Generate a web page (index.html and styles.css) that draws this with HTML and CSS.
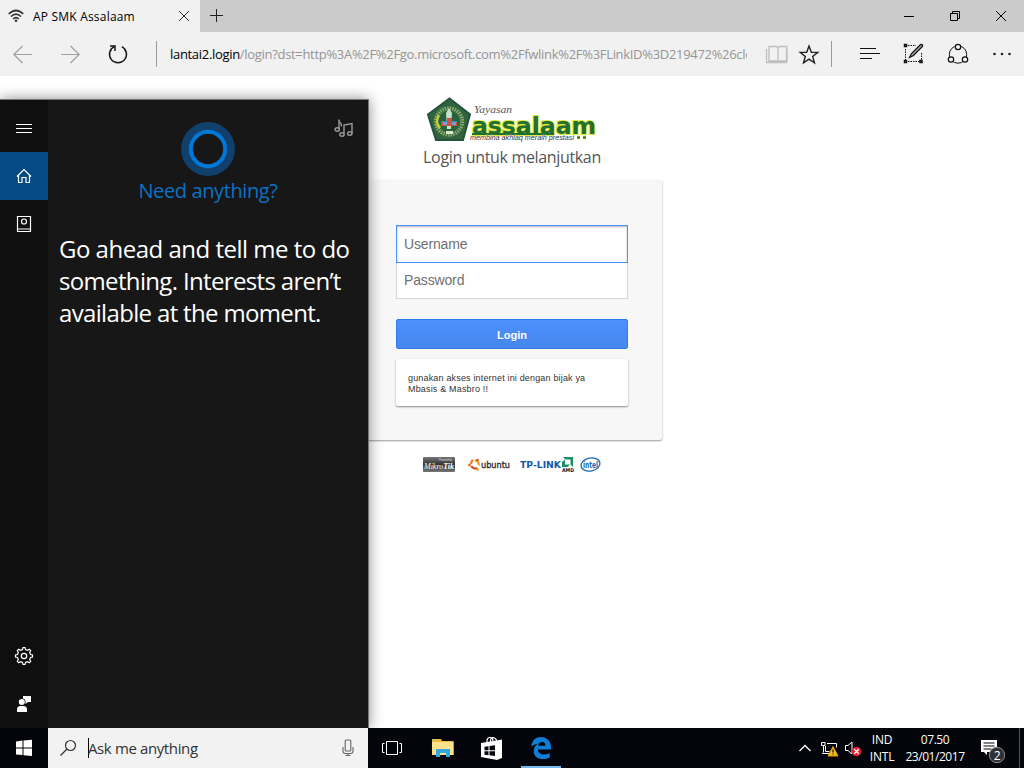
FILE: index.html
```html
<!DOCTYPE html>
<html lang="en">
<head>
<meta charset="utf-8">
<title>AP SMK Assalaam</title>
<link rel="stylesheet" href="styles.css">
</head>
<body>
<div class="desktop">
  <header class="tabbar">
    <div class="tab">
      <svg class="wifi" width="16" height="14" viewBox="0 0 16 14" fill="none" stroke="#333" stroke-width="1.700"><path d="M.7 5Q8-2 15.300 5M3 7.500Q8 2.700 13 7.500M5.200 10Q8 7.200 10.800 10"/><circle cx="8" cy="11.700" r="1.300" fill="#333" stroke="none"/></svg>
      <span class="tab-title">AP SMK Assalaam</span>
      <svg width="12" height="12" viewBox="0 0 12 12" stroke="#333" fill="none"><path d="M1 1l10 10M11 1L1 11"/></svg>
    </div>
    <svg class="plus" width="14" height="14" viewBox="0 0 14 14" stroke="#222" fill="none"><path d="M6.500 0v13M0 6.500h13"/></svg>
    <div class="window-buttons">
      <svg width="46" height="32" viewBox="0 0 46 32" stroke="#000" fill="none"><path d="M18 16.500h10"/></svg>
      <svg width="46" height="32" viewBox="0 0 46 32" stroke="#000" fill="none"><path d="M18.500 13.500h7v7h-7zM20.500 13v-1.500h7v7h-2"/></svg>
      <svg width="46" height="32" viewBox="0 0 46 32" stroke="#000" fill="none"><path d="M18 11l10 10M28 11L18 21"/></svg>
    </div>
  </header>
  <nav class="toolbar">
    <svg width="48" height="44" viewBox="0 0 48 44" stroke="#a0a0a0" stroke-width="1.200" fill="none"><path d="M32 22.500H13.500M22.500 14l-8.700 8.500 8.700 8.500"/></svg>
    <svg width="48" height="44" viewBox="0 0 48 44" stroke="#a0a0a0" stroke-width="1.200" fill="none"><path d="M13 22.500h18.500M22.500 14l8.700 8.500-8.700 8.500"/></svg>
    <svg width="60" height="44" viewBox="0 0 60 44" stroke="#1a1a1a" stroke-width="1.500" fill="none"><path d="M25.800 14.700a8.500 8.500 0 1 1-7.600 0M14 14h5v5"/></svg>
    <span class="divider"></span>
    <span class="address"><b>lantai2.login</b>/login?dst=http%3A%2F%2Fgo.microsoft.com%2Ffwlink%2F%3FLinkID%3D219472%26clcid</span>
    <svg width="84" height="44" viewBox="0 0 84 44" fill="none"><path d="M22 14.500h7.500l1.500 1.500v14l-1.500-1H22zM40 14.500h-7.500L31 16v14l1.500-1H40zM19.500 17v13.500h20V17" stroke="#bebebe" stroke-width="1.300"/><path d="M62 14l2.300 6.200 6.500.2-5.100 4 1.800 6.400-5.500-3.700-5.500 3.700 1.800-6.400-5.100-4 6.500-.2z" stroke="#222" stroke-width="1.400"/></svg>
    <span class="divider"></span>
    <svg width="192" height="44" viewBox="0 0 192 44" fill="none" stroke="#111">
      <path d="M28 16.500h16M28 21.500h20M28 26.500h12"/>
      <path d="M76 13.500h8M73.500 17v11M89.500 21v7M76 29.500h12" stroke-dasharray="1.500 1"/><path d="M72.500 12.500h2v2h-2zM72.500 28.500h2v2h-2zM88 28.500h2v2h-2z" stroke-width="1.500"/><path d="M77.500 25.500l2-4 9-9c1.500-.6 2.500.5 2 2l-9 9z" fill="#999" stroke-width="1.200"/>
      <circle cx="126" cy="22.500" r="8.700"/><g fill="#f0f0f0" stroke-width="1.200"><circle cx="126" cy="15" r="2.700"/><circle cx="119" cy="27.500" r="2.700"/><circle cx="133" cy="27.500" r="2.700"/></g>
      <g fill="#222" stroke="none"><circle cx="162.500" cy="22" r="1.300"/><circle cx="170" cy="22" r="1.300"/><circle cx="177.500" cy="22" r="1.300"/></g>
    </svg>
  </nav>

  <main class="page">
    <svg class="brand" width="170" height="48" viewBox="0 0 170 48">
      <path d="M22.500 2.500L43 18.500 36 44H9L1 18.500z" fill="#31633d" stroke="#25523a" stroke-width="2"/>
      <circle cx="22" cy="25.500" r="13.200" fill="none" stroke="#88ad73" stroke-width="4" stroke-dasharray="1.500 1"/>
      <path d="M11 18q-5 9 1 15l2-2q-5-5-1-11z" fill="#c4cb35"/>
      <circle cx="22" cy="25" r="9.500" fill="#23643f"/>
      <path d="M22 12l3 5-1 16h-4l-1-16z" fill="#c8e0c4"/><path d="M14 25h16v4H14z" fill="#4287bd"/><path d="M20 22h5v4h5v4H14v-4h6z" fill="#cf5144"/><path d="M16 26h4v3h-4zM25 26h4v3h-4z" fill="#65a7d1"/>
      <path d="M19 35h7v3h-7z" fill="#dce9ce"/>
      <path d="M45 38.500h82M150 41.500h3M156 41.500h3" stroke="#d9e832" stroke-width="4"/>
      <text x="47" y="17" textLength="38" lengthAdjust="spacingAndGlyphs" class="brand-script">Yayasan</text>
      <text x="45" y="38" textLength="124" lengthAdjust="spacingAndGlyphs" class="brand-name">assalaam</text>
      <path d="M45 38h82M150 41.500h3M156 41.500h3" stroke="#236f31" stroke-width="2"/>
      <text x="43" y="44" textLength="104" lengthAdjust="spacingAndGlyphs" class="brand-tag">membina akhlaq meraih prestasi</text>
    </svg>
    <h1>Login untuk melanjutkan</h1>
    <form class="card">
      <input class="field focused" type="text" placeholder="Username">
      <input class="field" type="password" placeholder="Password">
      <button type="button">Login</button>
      <p class="note">gunakan akses internet ini dengan bijak ya<br>Mbasis &amp; Masbro !!</p>
    </form>
    <svg class="partners" width="180" height="18" viewBox="0 0 180 18">
      <defs><linearGradient id="metal" x1="0" y1="0" x2="0" y2="1"><stop offset="0" stop-color="#777"/><stop offset=".5" stop-color="#333"/><stop offset="1" stop-color="#777"/></linearGradient></defs>
      <rect x="1" y="1" width="32" height="15" rx="1" fill="url(#metal)"/>
      <text x="17" y="4.500" textLength="13" class="partner-tiny">Powered by</text>
      <text x="2" y="12.500" textLength="30" lengthAdjust="spacingAndGlyphs" class="mikrotik">Mikro<tspan font-weight="bold">Tik</tspan></text>
      <g fill="none" stroke-width="2.200"><path d="M51 4a4.500 4.500 0 0 0-2 4" stroke="#e87b20"/><path d="M49.300 10a4.500 4.500 0 0 0 6 2" stroke="#d34a20"/><path d="M52.500 4.500a4.500 4.500 0 0 1 4.500 5" stroke="#eda126"/></g><circle cx="47.500" cy="9" r="1.300" fill="#e85b1b"/><circle cx="55.500" cy="4" r="1.300" fill="#d64622"/><circle cx="55.500" cy="13.500" r="1.300" fill="#f09622"/>
      <text x="59" y="11.500" textLength="29" lengthAdjust="spacingAndGlyphs" class="ubuntu">ubuntu</text>
      <text x="98" y="12" textLength="41" lengthAdjust="spacingAndGlyphs" class="tplink">TP-LINK</text>
      <path d="M141 1h10v10l-2.500-2.500v-5h-5zM140 6l3-2.500v5h5l-2.500 2.500H140z" fill="#169266"/>
      <text x="140" y="16" textLength="12" lengthAdjust="spacingAndGlyphs" class="amd">AMD</text>
      <ellipse cx="168.500" cy="8.500" rx="9.600" ry="6.500" fill="none" stroke="#1768ad" stroke-width="1.300" transform="rotate(-12 168.500 8.500)"/>
      <text x="161" y="11.500" textLength="15" lengthAdjust="spacingAndGlyphs" class="intel">intel</text>
    </svg>
  </main>

  <aside class="assistant">
    <div class="rail">
      <svg width="48" height="52" viewBox="0 0 48 52" stroke="#fff" fill="none"><path d="M16 24.500h16M16 28.500h16M16 32.500h16"/></svg>
      <svg class="active" width="48" height="48" viewBox="0 0 48 48" stroke="#fff" stroke-width="1.200" fill="none"><path d="M17 24.500L24 17.500l7 7M18.500 23.500v7h3.500v-5h4v5h3.500v-7"/></svg>
      <svg width="48" height="48" viewBox="0 0 48 48" stroke="#fff" stroke-width="1.200" fill="none"><path d="M17.500 16.500h13v15h-13zM17.500 29h13"/><circle cx="24" cy="21.500" r="2.500"/></svg>
      <svg class="settings" width="48" height="48" viewBox="0 0 48 48" stroke="#fff" stroke-width="1.200" fill="none"><path d="M22.500 18l.5-2h2l.5 2 2 .8 1.800-1 1.400 1.400-1 1.800.8 2 2 .5v2l-2 .5-.8 2 1 1.800-1.400 1.400-1.800-1-2 .8-.5 2h-2l-.5-2-2-.8-1.800 1-1.400-1.400 1-1.800-.8-2-2-.5v-2l2-.5.8-2-1-1.800 1.400-1.400 1.800 1z" transform="translate(0 -.5)"/><circle cx="24" cy="24" r="2.700"/></svg>
      <svg width="48" height="48" viewBox="0 0 48 48" fill="#fff"><circle cx="21.800" cy="22" r="3"/><path d="M17 32v-2.500q0-3.500 3.500-3.500h3q3.500 0 3.500 3.500V32zM23 16h8v6h-3l-2.500 2V21q0-2-2.500-2.500z"/></svg>
    </div>
    <section class="assistant-body">
      <svg class="notes" width="20" height="20" viewBox="0 0 20 20" stroke="#999" stroke-width="1.400" fill="none"><ellipse cx="3.200" cy="11.500" rx="2.200" ry="1.800"/><path d="M5 11V1.500q0 3 2.300 4.500v2.500"/><ellipse cx="8" cy="16.500" rx="2.200" ry="1.800"/><ellipse cx="15.800" cy="15.500" rx="2.200" ry="1.800"/><path d="M10 16.500V7l8-1.500v10"/></svg>
      <svg class="ring" width="54" height="54" viewBox="0 0 54 54"><circle cx="27" cy="27" r="27" fill="#10406b"/><circle cx="27" cy="27" r="17.200" fill="#171717" stroke="#0078d7" stroke-width="4"/></svg>
      <h2>Need anything?</h2>
      <p><span>Go ahead and tell me to do</span><br><span class="tight">something. Interests aren’t</span><br><span class="tight">available at the moment.</span></p>
    </section>
  </aside>

  <footer class="taskbar">
    <svg width="48" height="40" viewBox="0 0 48 40" fill="#fff"><path d="M16 13.500l6.500-.9v7H16zM23.500 12.400L32 11.800v7.800h-8.500zM16 20.600h6.500v6.500L16 26.400zM23.500 20.600H32V28l-8.500-.8z"/></svg>
    <div class="search">
      <svg width="18" height="18" viewBox="0 0 18 18" fill="none" stroke="#333" stroke-width="1.200"><circle cx="10.500" cy="6.500" r="5"/><path d="M7 10L.5 16.500"/></svg>
      <span class="caret"></span><span class="query">Ask me anything</span>
      <svg width="12" height="18" viewBox="0 0 12 18" fill="none" stroke="#666" stroke-width="1.100"><rect x="3.200" y="1" width="5.600" height="11" rx="1"/><path d="M1 8v4q0 2.500 2.500 2.500h5q2.500 0 2.500-2.500V8M6 14.500V16.500M3.500 16.500h5"/></svg>
    </div>
    <svg width="48" height="40" viewBox="0 0 48 40" fill="none" stroke="#fff"><path d="M18.500 13.500h11v13h-11zM16.500 15.500h-2v9h2M31.500 15.500h2v9h-2"/></svg>
    <svg width="50" height="40" viewBox="0 0 50 40"><path d="M16 11h9l1 2h11.500v14H16z" fill="#efb940"/><path d="M16 14h21.500v13H16z" fill="#ffe18b"/><path d="M20 29v-8h14v8h-4v-4h-6v4z" fill="#31a8e0"/><path d="M18 12h2" stroke="#54c9ee"/></svg>
    <svg width="50" height="40" viewBox="0 0 50 40"><path d="M21 15v-3q1-3 3.500-2.500T27 13v2M24.500 14v-2q1-3.500 4-2t1.500 5" fill="none" stroke="#fff" stroke-width="1.200"/><path d="M15 15l21-3.500V30l-5 2-16-3z" fill="#fff"/><path d="M18.500 18.700l4-.5v4h-4zM23.500 18l5.500-.7v4.900h-5.500zM18.500 23.200h4v4l-4-.5zM23.500 23.200H29V28l-5.500-.7z" fill="#05070b"/></svg>
    <div class="edge-task"><svg width="40" height="40" viewBox="0 0 40 40"><path d="M10.200 18.500C11 12 15 9 20 9c6 0 10 4.500 10 10v2.500H17c0 3.300 2.500 5 6 5 2.500 0 4.500-.7 5.700-1.500v4.500c-2 1-4.400 1.500-7 1.500-6 0-9-3.700-9-7.800 0-3.700 1.800-6.500 5.200-8-3.500.7-5.800 2-7.700 3.300zM17 17.800h7.500c0-2.300-1-3.700-3.500-3.700-2.200 0-3.500 1.400-4 3.700z" fill="#0e7dd8"/></svg></div>
    <div class="tray">
      <svg width="82" height="40" viewBox="0 0 82 40" fill="none" stroke="#fff"><path d="M13.500 23l5.500-5.500 5.500 5.500" stroke-width="1.300"/><path d="M35.500 14.500h3.500v3h-3.500zM37.500 17.500v7M41 15.500h9.500v4M39.500 18v5.500h4M36 25.500h8"/><path d="M47 18.500l5 9.500H42z" fill="#f7bd1e" stroke="#dba100"/><path d="M47 21.500v3M47 25.500v1" stroke="#222" stroke-width="1.300"/><path d="M59.500 17.500h2.500l4-3.500v12l-4-3.500h-2.500z"/><circle cx="70.500" cy="23.500" r="4.800" fill="#dc2437" stroke="none"/><path d="M68.300 21.300l4.400 4.400M72.700 21.300l-4.400 4.400" stroke-width="1.300"/></svg>
      <div class="language">IND<br>INTL</div>
      <div class="clock">07.50<br>23/01/2017</div>
      <svg width="32" height="40" viewBox="0 0 32 40"><path d="M8 12h16v12H14v3l-3-3H8z" fill="#fff"/><path d="M10.500 15h11M10.500 18h11M10.500 21h8" stroke="#05070b"/><circle cx="24" cy="27" r="7.700" fill="#303134" stroke="#898989"/><text x="24" y="31.500" text-anchor="middle" class="badge">2</text></svg>
      <span class="show-desktop"></span>
    </div>
  </footer>
</div>
</body>
</html>
```
FILE: styles.css
```css
* { box-sizing: border-box; }
body { margin: 0; font-family: "Open Sans", "Noto Sans", sans-serif; }
svg { display: block; flex: none; }
.desktop { width: 1024px; height: 768px; display: flex; flex-direction: column; position: relative; overflow: hidden; background: #fff; }

.tabbar { height: 32px; display: flex; align-items: center; background: #cbcbcb; }
.tab { width: 200px; height: 32px; display: flex; align-items: center; padding: 0 10px 0 8px; background: #f1f1f1; }
.wifi { margin-top: -1px; }
.tab-title { flex: 1; padding-left: 9px; font-size: 12px; letter-spacing: .2px; white-space: nowrap; }
.plus { margin-left: 10px; }
.window-buttons { margin-left: auto; display: flex; }

.toolbar { height: 44px; display: flex; align-items: center; background: #f1f1f1; }
.divider { width: 1px; height: 26px; background: #999; }
.address { width: 591px; height: 24px; padding-left: 13px; overflow: hidden; color: #959595; font-size: 13px; line-height: 24px; letter-spacing: -.31px; white-space: nowrap; }
.address b { color: #000; font-weight: 400; }

.page { flex: 1; min-height: 0; display: flex; flex-direction: column; align-items: center; padding-top: 20px; }
.brand-script { font: italic 11px "Liberation Serif", serif; fill: #555; }
.brand-name { font: 900 23px "DejaVu Sans", sans-serif; fill: #236f31; stroke: #d9e832; stroke-width: 2px; paint-order: stroke; }
.brand-tag { font: italic 7px "Liberation Sans", sans-serif; fill: #333; stroke: #fff; stroke-width: .6px; paint-order: stroke; }
h1 { margin: 1px 0 0; height: 35px; color: #555; font-size: 16px; line-height: 25px; font-weight: 400; letter-spacing: -.34px; white-space: nowrap; }
.card { width: 300px; height: 260px; padding: 45px 34px 0; display: flex; flex-direction: column; background: #f7f7f7; border-radius: 2px; box-shadow: 0 1px 2px rgba(0,0,0,.4); }
.field { width: 232px; height: 36px; padding: 0 7px 2px; border: 1px solid #d5d5d5; border-top: 0; border-radius: 0; outline: 0; color: #666; background: #fff; font: 14px "Liberation Sans", sans-serif; letter-spacing: -.15px; }
.field::placeholder { color: #707070; opacity: 1; }
.field.focused { height: 38px; padding-bottom: 0; border: 1px solid #4d90fe; box-shadow: inset 0 1px 2px rgba(0,0,0,.3); }
.card button { height: 30px; margin: 20px 0 10px; padding: 1px 0 0; border: 1px solid #3079ed; border-radius: 2px; background: linear-gradient(#4d90fe, #4787ed); color: #fff; font: bold 11px "Liberation Sans", sans-serif; text-shadow: 0 1px rgba(0,0,0,.1); }
.note { height: 47px; margin: 0; padding: 14px 12px; background: #fff; border-radius: 2px; box-shadow: 0 1px 2px rgba(0,0,0,.45); color: #333; font: 9px/11px "Liberation Sans", sans-serif; letter-spacing: .17px; white-space: nowrap; }
.partners { margin-top: 16px; }
.partner-tiny { font: 3px "Liberation Sans", sans-serif; fill: #ccc; }
.mikrotik { font: italic 9px "Liberation Serif", serif; fill: #fff; }
.ubuntu { font: 9px "DejaVu Sans", sans-serif; fill: #222; stroke: #222; stroke-width: .3px; }
.tplink { font: bold 8px "DejaVu Sans", sans-serif; fill: #1557a5; }
.amd { font: bold 5px "DejaVu Sans", sans-serif; fill: #111; }
.intel { font: bold 8px "DejaVu Sans", sans-serif; fill: #1768ad; }

.assistant { position: absolute; left: 0; top: 99px; width: 369px; height: 629px; display: flex; border-top: 1px solid #777; border-right: 1px solid #777; background: #171717; box-shadow: 0 0 13px rgba(0,0,0,.45); }
.rail { width: 48px; display: flex; flex-direction: column; background: #0f0f0f; }
.active { background: #064a83; }
.settings { margin-top: auto; }
.assistant-body { flex: 1; display: flex; flex-direction: column; align-items: center; padding-top: 18px; color: #fff; }
.notes { align-self: flex-end; margin-right: 14px; }
.ring { margin-top: -16px; }
h2 { margin: 1px 0 0; color: #0b72c5; font-size: 20px; line-height: 28px; font-weight: 400; letter-spacing: -.38px; white-space: nowrap; }
.assistant-body p { align-self: stretch; margin: 28px 0 0 11px; font-size: 24px; line-height: 32px; letter-spacing: -.5px; white-space: nowrap; }
.tight { letter-spacing: -.66px; }

.taskbar { height: 40px; display: flex; background: #03050a; color: #fff; position: relative; }
.search { width: 320px; display: flex; align-items: center; padding: 0 14px 0 12px; background: #f2f2f2; color: #333; }
.caret { width: 1px; height: 20px; margin-left: 10px; background: #000; }
.query { flex: 1; margin-left: -1px; font-size: 15px; letter-spacing: -.38px; }
.edge-task { width: 40px; margin-left: 5px; box-shadow: inset 0 -2px #76b9ed; }
.tray { margin-left: auto; display: flex; align-items: center; font-size: 12px; line-height: 17px; text-align: center; letter-spacing: -.2px; }
.tray > svg:first-child { margin-right: -1px; }
.language { width: 30px; white-space: nowrap; }
.clock { width: 76px; letter-spacing: -.45px; white-space: nowrap; }
.badge { font: 12px "Open Sans", sans-serif; fill: #fff; }
.show-desktop { width: 1px; height: 40px; margin: 0 4px 0 14px; background: #555; }
```
